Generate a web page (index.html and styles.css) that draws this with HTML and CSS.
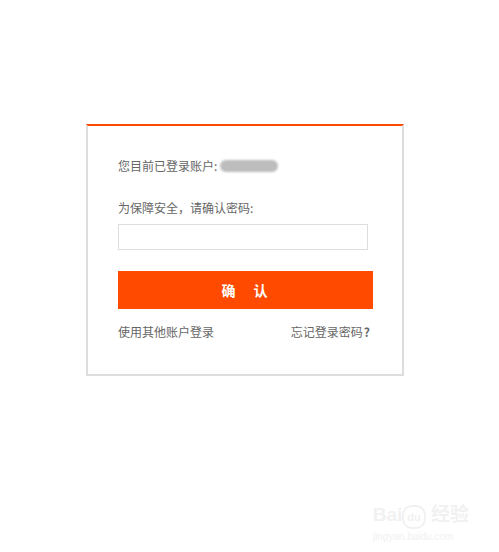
FILE: index.html
```html
<!DOCTYPE html>
<html lang="zh-CN">
<head>
    <meta charset="UTF-8">
    <title>确认密码</title>
    <link rel="stylesheet" href="styles.css">
</head>
<body>
    <div class="page">
        <div class="login-box">
            <p class="account">您目前已登录账户: <span class="masked"></span></p>
            <p class="tip">为保障安全，请确认密码:</p>
            <input type="password" class="pwd">
            <button type="button" class="confirm">确　认</button>
            <div class="links">
                <a href="#">使用其他账户登录</a>
                <a href="#">忘记登录密码<b>?</b></a>
            </div>
        </div>
        <div class="watermark">
            <div class="wm-logo">Bai<span class="wm-du">du</span> 经验</div>
            <div class="wm-url">jingyan.baidu.com</div>
        </div>
    </div>
</body>
</html>
```
FILE: styles.css
```css
body {
    margin: 0;
    background: #fff;
    font-family: "Noto Sans CJK SC", "Liberation Sans", sans-serif;
    color: #666;
}
.page {
    position: relative;
    width: 499px;
    height: 552px;
    overflow: hidden;
}
.login-box {
    box-sizing: border-box;
    width: 318px;
    margin: 124px 0 0 86px;
    padding: 31px 29px 33px 30px;
    border: 2px solid #ddd;
    border-top: 2px solid #ff4a00;
}
.login-box p {
    margin: 0;
    font-size: 12px;
    line-height: 18px;
}
.account {
    display: flex;
    align-items: center;
}
.masked {
    display: inline-block;
    width: 58px;
    height: 12px;
    margin-left: 3px;
    background: #bdbdbd;
    border-radius: 6px;
    filter: blur(1px);
}
.tip {
    margin-top: 24px !important;
}
.pwd {
    display: block;
    box-sizing: border-box;
    width: 250px;
    height: 26px;
    margin-top: 7px;
    border: 1px solid #ddd;
    outline: none;
}
.confirm {
    display: block;
    width: 255px;
    height: 38px;
    margin-top: 21px;
    border: none;
    background: #ff4a00;
    color: #fff;
    font-family: inherit;
    font-size: 14px;
    font-weight: bold;
    letter-spacing: 2px;
    cursor: pointer;
}
.links {
    display: flex;
    justify-content: space-between;
    margin: 14px 3px 0 0;
    font-size: 12px;
    line-height: 18px;
}
.links a {
    color: #666;
    text-decoration: none;
}
.links b {
    margin-left: 1px;
}
.watermark {
    position: absolute;
    right: 30px;
    bottom: 10px;
    color: #f1f1f1;
    font-family: "Liberation Sans", "Noto Sans CJK SC", sans-serif;
}
.wm-logo {
    font-size: 19px;
    font-weight: bold;
}
.wm-du {
    display: inline-block;
    font-size: 11px;
    padding: 4px 3px;
    border: 2px solid #f1f1f1;
    border-radius: 10px;
}
.wm-url {
    font-size: 10px;
    margin-top: 2px;
}
```
